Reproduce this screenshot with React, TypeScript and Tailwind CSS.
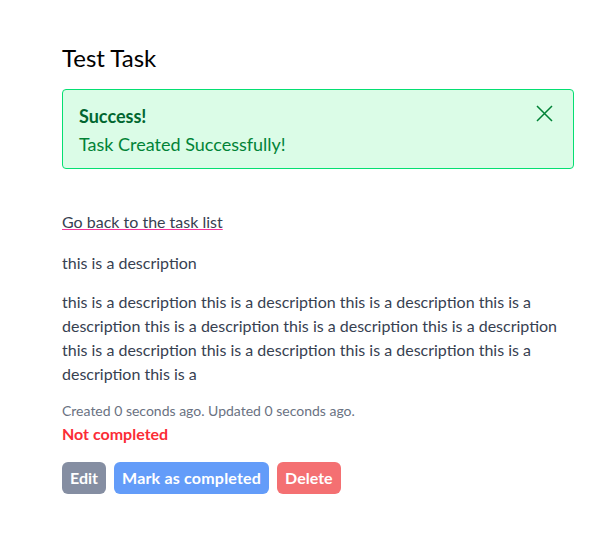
const LONG =
  'this is a description this is a description this is a description this is a description this is a description this is a description this is a description this is a description this is a description this is a description this is a description this is a';

export default function App() {
  return (
    <div className="min-h-[534px] bg-white font-['Lato','Liberation_Sans',sans-serif] text-[#374151]">
      <div className="w-[512px] ml-[62px] pt-[42px]">
        <h1 className="text-2xl leading-8 text-black">Test Task</h1>

        {/* Alert */}
        <div className="relative mt-[15px] rounded border border-green-400 bg-green-100 px-4 pt-3 pb-[10px] text-green-700">
          <p className="text-lg leading-7 font-bold text-green-800">Success!</p>
          <p className="text-lg leading-7">Task Created Successfully!</p>
          <button className="absolute right-[20px] top-[15px] text-green-700">
            <svg width="17" height="17" viewBox="0 0 17 17" fill="none" stroke="currentColor" strokeWidth="1.5">
              <path d="M1 1 16 16M16 1 1 16" />
            </svg>
          </button>
        </div>

        <a href="#" className="mt-[41px] block w-fit leading-6 underline decoration-pink-500">
          Go back to the task list
        </a>
        <p className="mt-[17px] leading-6">this is a description</p>
        <p className="mt-[15px] leading-6">{LONG}</p>

        <p className="mt-[15px] text-sm leading-5 text-gray-500">
          Created 0 seconds ago. Updated 0 seconds ago.
        </p>
        <p className="mt-px leading-6 font-bold text-red-500">Not completed</p>

        <div className="mt-4 flex gap-2">
          <button className="h-8 rounded-md bg-[#858ea2] px-2 font-bold text-white">Edit</button>
          <button className="h-8 rounded-md bg-[#639cf9] px-2 font-bold text-white tracking-[0.2px]">Mark as completed</button>
          <button className="h-8 rounded-md bg-[#f47072] px-2 font-bold text-white">Delete</button>
        </div>
      </div>
    </div>
  );
}
